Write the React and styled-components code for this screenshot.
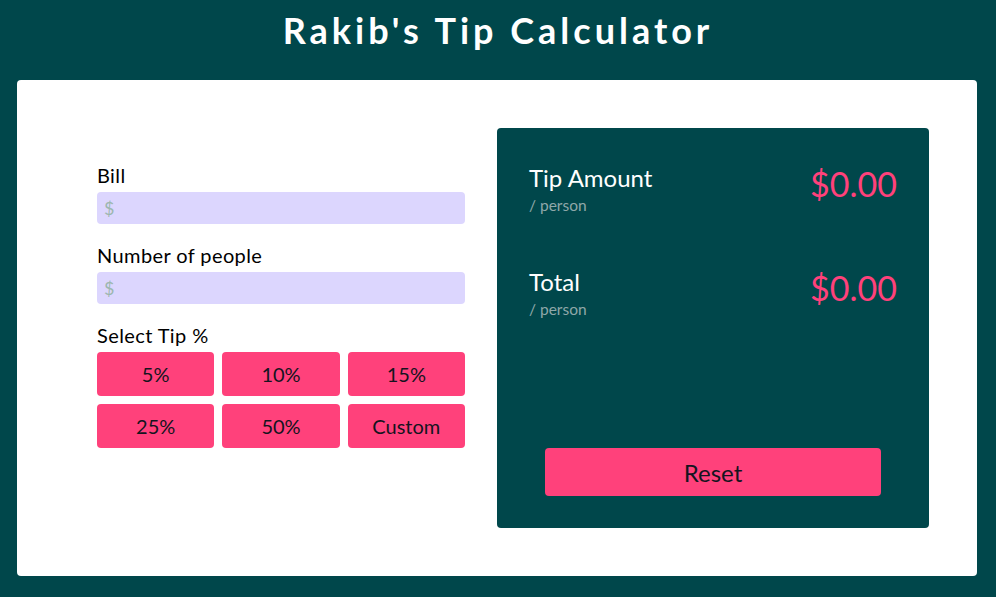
import React from "react";
import styled, { createGlobalStyle } from "styled-components";

const Global = createGlobalStyle`
  html, body { margin: 0; padding: 0; }
  body {
    background: #00474b;
    font-family: "Segoe UI", Lato, "Noto Sans", sans-serif;
  }
  * { box-sizing: border-box; }
`;

const Header = styled.header`
  height: 80px;
  display: flex;
  justify-content: center;
`;

const Title = styled.h1`
  margin: 8px 0 0;
  line-height: 44px;
  font-size: 36px;
  font-weight: 700;
  letter-spacing: 4px;
  color: #ffffff;
`;

const Card = styled.main`
  margin: 0 0 21px 17px;
  width: 960px;
  height: 496px;
  background: #ffffff;
  border-radius: 4px;
  padding: 48px 48px 48px 80px;
  display: flex;
  gap: 32px;
`;

const Form = styled.section`
  width: 368px;
  padding-top: 35px;
  display: flex;
  flex-direction: column;
`;

const Label = styled.label`
  display: block;
  font-size: 20px;
  line-height: 24px;
  letter-spacing: 0.4px;
  color: #000;
  margin: ${(p) => (p.$first ? "0" : "19px")} 0 5px;
`;

const Input = styled.input`
  display: block;
  width: 100%;
  height: 32px;
  border: none;
  border-radius: 4px;
  background: #dcd6fe;
  padding: 0 7px;
  font-family: inherit;
  font-size: 18px;
  outline: none;
  &::placeholder { color: #9db7ae; }
`;

const TipGrid = styled.div`
  display: grid;
  grid-template-columns: repeat(3, 1fr);
  grid-auto-rows: 44px;
  gap: 8px;
`;

const TipButton = styled.button`
  border: none;
  border-radius: 4px;
  background: #ff417b;
  color: #141420;
  font-family: inherit;
  font-size: 20px;
  cursor: pointer;
`;

const Panel = styled.section`
  width: 432px;
  height: 400px;
  background: #00474b;
  border-radius: 4px;
  padding: 35px 32px 32px;
  display: flex;
  flex-direction: column;
`;

const ResultRow = styled.div`
  display: flex;
  justify-content: space-between;
  align-items: flex-start;
  margin-top: ${(p) => (p.$first ? "0" : "52px")};
`;

const ResultName = styled.div`
  font-size: 24px;
  line-height: 30px;
  color: #ffffff;
`;

const Per = styled.div`
  margin-top: 2px;
  font-size: 15.5px;
  line-height: 20px;
  color: #8fa8a9;
`;

const Amount = styled.div`
  font-size: 34px;
  line-height: 42px;
  color: #ff417b;
`;

const Reset = styled.button`
  margin: auto 16px 0;
  height: 48px;
  border: none;
  border-radius: 4px;
  background: #ff417b;
  color: #141420;
  font-family: inherit;
  font-size: 24px;
  cursor: pointer;
`;

const tips = ["5%", "10%", "15%", "25%", "50%", "Custom"];

export default function App() {
  return (
    <>
      <Global />
      <Header>
        <Title>Rakib's Tip Calculator</Title>
      </Header>
      <Card>
        <Form>
          <Label $first>Bill</Label>
          <Input placeholder="$" />
          <Label>Number of people</Label>
          <Input placeholder="$" />
          <Label>Select Tip %</Label>
          <TipGrid>
            {tips.map((t) => (
              <TipButton key={t}>{t}</TipButton>
            ))}
          </TipGrid>
        </Form>
        <Panel>
          <ResultRow $first>
            <div>
              <ResultName>Tip Amount</ResultName>
              <Per>/ person</Per>
            </div>
            <Amount>$0.00</Amount>
          </ResultRow>
          <ResultRow>
            <div>
              <ResultName>Total</ResultName>
              <Per>/ person</Per>
            </div>
            <Amount>$0.00</Amount>
          </ResultRow>
          <Reset>Reset</Reset>
        </Panel>
      </Card>
    </>
  );
}
